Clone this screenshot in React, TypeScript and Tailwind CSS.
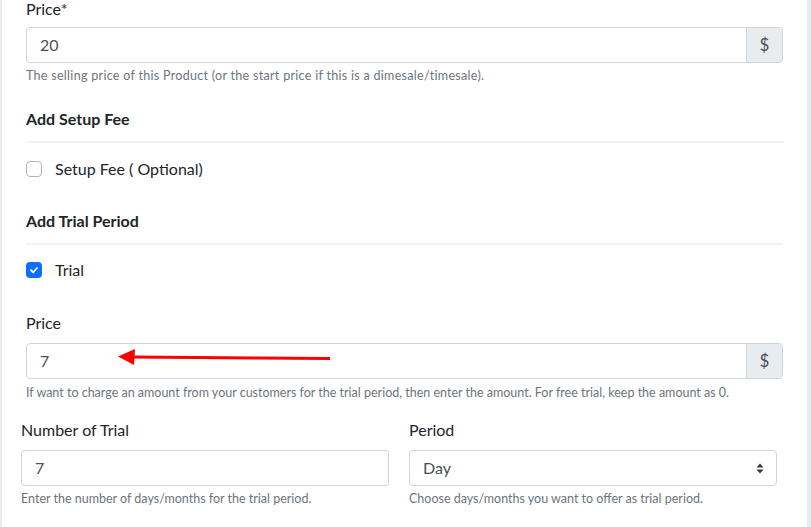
import React from 'react';

const font = { fontFamily: 'Lato, "Open Sans", sans-serif' };

function HelpText({ children, wide }: { children: React.ReactNode; wide?: boolean }) {
  return (
    <p className={`text-[12.5px] leading-[14px] text-[#6c757d] ${wide ? 'tracking-[0.3px]' : ''}`}>{children}</p>
  );
}

function AddonInput({ value, arrow }: { value: string; arrow?: boolean }) {
  return (
    <div className="relative flex h-[36px] w-full rounded-[4px] border border-[#ced4da] bg-white">
      <div className="flex flex-1 items-center pl-[13px] text-[16px] text-[#495057]">{value}</div>
      <div className="flex w-[36px] items-center justify-center rounded-r-[4px] border-l border-[#ced4da] bg-[#e9ecef] text-[17px] text-[#495057]">
        $
      </div>
      {arrow && (
        <svg className="absolute left-[91px] top-[4px]" width="214" height="18" viewBox="0 0 214 18">
          <line x1="14" y1="9" x2="212" y2="10.5" stroke="#ff0000" strokeWidth="3" />
          <polygon points="0,8.5 17,1 16,17" fill="#ff0000" />
        </svg>
      )}
    </div>
  );
}

function Checkbox({ checked, label }: { checked?: boolean; label: string }) {
  return (
    <div className="flex h-[18px] items-center">
      {checked ? (
        <span className="flex h-[16px] w-[16px] items-center justify-center rounded-[4px] bg-[#0d6efd]">
          <svg width="10" height="10" viewBox="0 0 10 10">
            <path d="M2 5.2 L4.2 7.3 L8 3" fill="none" stroke="white" strokeWidth="1.8" strokeLinecap="round" strokeLinejoin="round" />
          </svg>
        </span>
      ) : (
        <span className="h-[16px] w-[16px] rounded-[4px] border border-[#adb5bd] bg-white" />
      )}
      <span className="ml-[13px] text-[16px] text-[#212529]">{label}</span>
    </div>
  );
}

export default function App() {
  return (
    <div className="flex h-[527px] w-[811px] overflow-hidden bg-white" style={font}>
      <div className="w-[2px] bg-[#e9edf1]" />
      <div className="flex-1">
        <div className="ml-[24px] mr-[24px]">
          <label className="block text-[16px] leading-[18px] text-[#212529]">Price*</label>
          <div className="mt-[9px]">
            <AddonInput value="20" />
          </div>
          <div className="mt-[6px]">
            <HelpText wide>The selling price of this Product (or the start price if this is a dimesale/timesale).</HelpText>
          </div>

          <h3 className="mt-[27px] text-[16px] font-bold leading-[18px] text-[#212529]">Add Setup Fee</h3>
          <div className="mt-[13px] h-[2px] bg-[#eef3f8]" />
          <div className="mt-[17px]">
            <Checkbox label="Setup Fee ( Optional)" />
          </div>

          <h3 className="mt-[34px] text-[16px] font-bold leading-[18px] text-[#212529]">Add Trial Period</h3>
          <div className="mt-[13px] h-[2px] bg-[#eef3f8]" />
          <div className="mt-[16px]">
            <Checkbox checked label="Trial" />
          </div>

          <label className="mt-[35px] block text-[16px] leading-[18px] text-[#212529]">Price</label>
          <div className="mt-[11px]">
            <AddonInput value="7" arrow />
          </div>
          <div className="mt-[7px]">
            <HelpText>
              If want to charge an amount from your customers for the trial period, then enter the amount. For free trial, keep the amount as 0.
            </HelpText>
          </div>
        </div>

        <div className="ml-[19px] mr-[30px] mt-[21px] grid grid-cols-2 gap-[20px]">
          <div>
            <label className="block text-[16px] leading-[18px] text-[#212529]">Number of Trial</label>
            <div className="mt-[11px] flex h-[36px] items-center rounded-[4px] border border-[#ced4da] bg-white pl-[13px] text-[16px] text-[#495057]">
              7
            </div>
            <div className="mt-[6px]">
              <HelpText>Enter the number of days/months for the trial period.</HelpText>
            </div>
          </div>
          <div>
            <label className="block text-[16px] leading-[18px] text-[#212529]">Period</label>
            <div className="mt-[11px] flex h-[36px] items-center justify-between rounded-[4px] border border-[#ced4da] bg-white pl-[13px] pr-[12px] text-[16px] text-[#495057]">
              <span>Day</span>
              <svg width="8" height="11" viewBox="0 0 8 11">
                <polygon points="4,0.5 7.5,4.5 0.5,4.5" fill="#343a40" />
                <polygon points="0.5,6.5 7.5,6.5 4,10.5" fill="#343a40" />
              </svg>
            </div>
            <div className="mt-[6px]">
              <HelpText>Choose days/months you want to offer as trial period.</HelpText>
            </div>
          </div>
        </div>
      </div>
      <div className="w-[4px] bg-[#e6ebf1]" />
    </div>
  );
}
